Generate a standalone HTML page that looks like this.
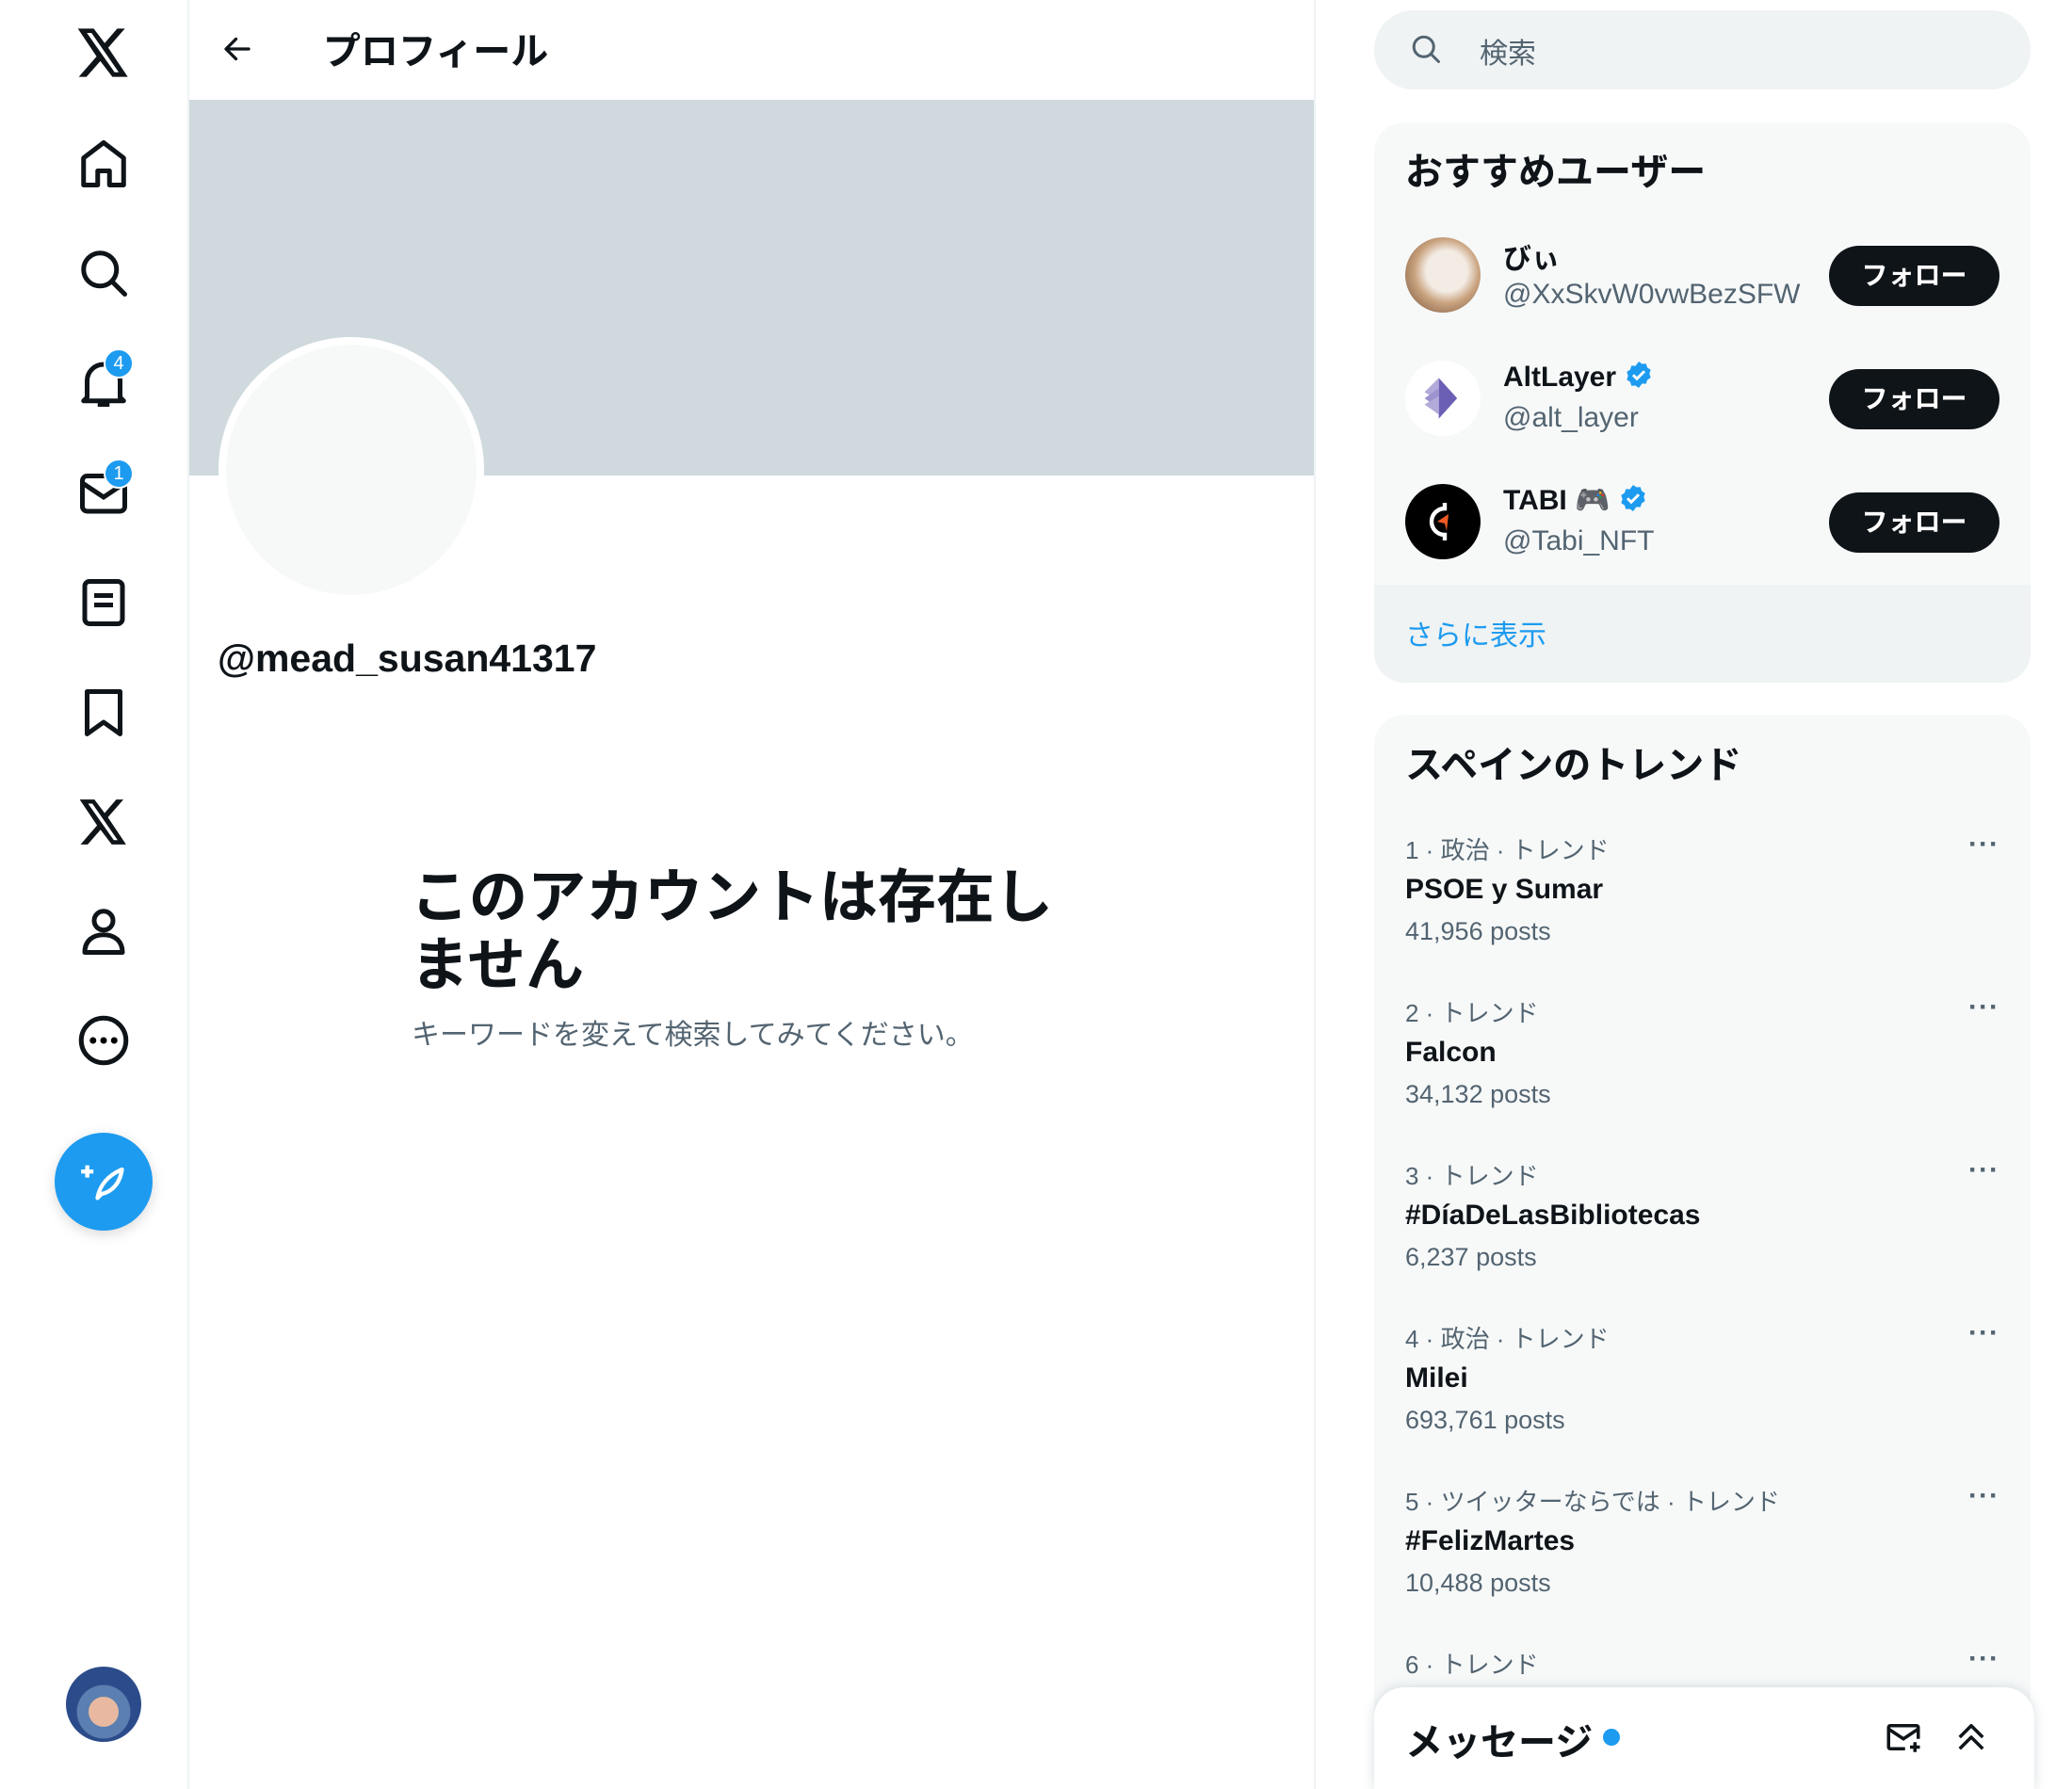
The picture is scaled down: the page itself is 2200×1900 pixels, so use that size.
<!DOCTYPE html>
<html style="width:2200px;height:1900px;overflow:hidden"><head><meta charset="utf-8">
<style>
*{margin:0;padding:0;box-sizing:border-box}
body{width:2200px;height:1900px;background:#fff;font-family:"Liberation Sans","Noto Sans CJK JP",sans-serif;color:#0f1419;position:relative;overflow:hidden}
.a{position:absolute}
.ic{position:absolute;left:80px;width:60px;height:60px}
.ic svg{width:60px;height:60px}
.badge{position:absolute;width:32px;height:32px;border-radius:50%;background:#1d9bf0;border:2px solid #fff;color:#fff;font-size:20px;text-align:center;line-height:28px}
.btn{position:absolute;left:1942px;width:181px;height:64px;border-radius:32px;background:#0f1419;color:#fff;font-size:28px;font-weight:bold;text-align:center;line-height:64px}
.name{position:absolute;left:1596px;font-size:30px;font-weight:bold}
.handle{position:absolute;left:1596px;font-size:30px;color:#536471}
.meta{position:absolute;left:1492px;font-size:26px;color:#536471}
.tn{position:absolute;left:1492px;font-size:30px;font-weight:bold}
.dots{position:absolute;left:2090px;font-size:30px;color:#536471;letter-spacing:1px;font-weight:bold}
.ver{display:inline-block;vertical-align:-4px;width:32px;height:32px}
</style></head><body>
<div class="a" style="left:199px;top:0;width:2px;height:1900px;background:#eff3f4"></div>
<svg class="a" style="left:82px;top:30px" width="56" height="52" viewBox="0 0 24 22"><path d="M18.2 0h3.5l-7.6 8.7L23 22h-7l-5.5-7.2L4.2 22H.7l8.1-9.3L.3 0h7.2l5 6.6zm-1.2 19.9h1.9L6.5 2H4.4z" fill="#0f1419"/></svg>
<div class="ic" style="top:144px"><svg viewBox="0 0 24 24"><path d="M12 3L3.5 9.5V21h6v-6h5v6h6V9.5z" fill="none" stroke="#0f1419" stroke-width="2" stroke-linejoin="round"/></svg></div>
<div class="ic" style="top:260px"><svg viewBox="0 0 24 24"><circle cx="10.5" cy="10.5" r="7" fill="none" stroke="#0f1419" stroke-width="2"/><path d="M15.5 15.5L21 21" stroke="#0f1419" stroke-width="2" stroke-linecap="round"/></svg></div>
<div class="ic" style="top:377px"><svg viewBox="0 0 24 24"><path d="M5 18V11a7 7 0 0114 0v7l1.5 1.5h-17zM9.5 21h5" fill="none" stroke="#0f1419" stroke-width="2" stroke-linejoin="round"/></svg></div>
<div class="badge" style="left:110px;top:370px">4</div>
<div class="ic" style="top:493px"><svg viewBox="0 0 24 24"><rect x="3" y="5" width="18" height="15" rx="2" fill="none" stroke="#0f1419" stroke-width="2"/><path d="M3 8l9 6 9-6" fill="none" stroke="#0f1419" stroke-width="2"/></svg></div>
<div class="badge" style="left:110px;top:487px">1</div>
<div class="ic" style="top:610px"><svg viewBox="0 0 24 24"><rect x="4" y="3" width="16" height="18" rx="2" fill="none" stroke="#0f1419" stroke-width="2"/><path d="M8 9h8M8 13h8" stroke="#0f1419" stroke-width="2"/></svg></div>
<div class="ic" style="top:727px"><svg viewBox="0 0 24 24"><path d="M5 3h14v18l-7-5-7 5z" fill="none" stroke="#0f1419" stroke-width="2" stroke-linejoin="round"/></svg></div>
<svg class="a" style="left:84px;top:849px" width="52" height="48" viewBox="0 0 24 22"><path d="M18.2 0h3.5l-7.6 8.7L23 22h-7l-5.5-7.2L4.2 22H.7l8.1-9.3L.3 0h7.2l5 6.6zm-1.2 19.9h1.9L6.5 2H4.4z" fill="#0f1419"/></svg>
<div class="ic" style="top:959px"><svg viewBox="0 0 24 24"><circle cx="12" cy="7.5" r="4" fill="none" stroke="#0f1419" stroke-width="2"/><path d="M4 21c0-5 3.5-7.5 8-7.5s8 2.5 8 7.5z" fill="none" stroke="#0f1419" stroke-width="2" stroke-linejoin="round"/></svg></div>
<div class="ic" style="top:1075px"><svg viewBox="0 0 24 24"><circle cx="12" cy="12" r="9.5" fill="none" stroke="#0f1419" stroke-width="2"/><circle cx="7.5" cy="12" r="1.4"/><circle cx="12" cy="12" r="1.4"/><circle cx="16.5" cy="12" r="1.4"/></svg></div>
<div class="a" style="left:58px;top:1203px;width:104px;height:104px;border-radius:50%;background:#1d9bf0;box-shadow:0 4px 14px rgba(0,0,0,.15)"><svg style="position:absolute;left:26px;top:26px" width="52" height="52" viewBox="0 0 24 24"><path d="M9 20c1-6 5-11 12-14-1 7-5 11-10 12l-2 2z" fill="none" stroke="#fff" stroke-width="2" stroke-linejoin="round"/><path d="M4 4v6M1 7h6" stroke="#fff" stroke-width="2"/></svg></div>
<div class="a" style="left:70px;top:1770px;width:80px;height:80px;border-radius:50%;background:radial-gradient(circle at 50% 60%,#e8b9a0 0 25%,#5a7fb0 26% 45%,#2b4b8a 46%)"></div>

<div class="a" style="left:1395px;top:0;width:2px;height:1900px;background:#eff3f4"></div>
<svg class="a" style="left:234px;top:34px" width="36" height="36" viewBox="0 0 24 24"><path d="M20 12H5M11 5l-7 7 7 7" fill="none" stroke="#0f1419" stroke-width="2.2" stroke-linecap="round" stroke-linejoin="round"/></svg>
<div class="a" style="left:343px;top:22px;font-size:40px;font-weight:bold">プロフィール</div>
<div class="a" style="left:201px;top:106px;width:1194px;height:399px;background:#cfd9de"></div>
<div class="a" style="left:232px;top:358px;width:282px;height:282px;border-radius:50%;background:#f7f9f9;border:8px solid #fff"></div>
<div class="a" style="left:231px;top:676px;font-size:41px;font-weight:bold">@mead_susan41317</div>
<div class="a" style="left:436px;top:918px;font-size:62px;font-weight:bold;line-height:72px;width:720px">このアカウントは存在しません</div>
<div class="a" style="left:437px;top:1074px;font-size:30px;color:#536471">キーワードを変えて検索してみてください。</div>

<div class="a" style="left:1459px;top:11px;width:697px;height:84px;border-radius:42px;background:#eff3f4"></div>
<svg class="a" style="left:1496px;top:34px" width="36" height="36" viewBox="0 0 24 24"><circle cx="10.5" cy="10.5" r="7" fill="none" stroke="#536471" stroke-width="2"/><path d="M15.5 15.5L21 21" stroke="#536471" stroke-width="2" stroke-linecap="round"/></svg>
<div class="a" style="left:1571px;top:32px;font-size:30px;color:#536471">検索</div>

<div class="a" style="left:1459px;top:130px;width:697px;height:595px;border-radius:32px;background:#f7f9f9;overflow:hidden"><div style="position:absolute;left:0;top:491px;width:697px;height:104px;background:#eff3f4"></div></div>
<div class="a" style="left:1492px;top:150px;font-size:40px;font-weight:bold">おすすめユーザー</div>
<div class="a" style="left:1492px;top:252px;width:80px;height:80px;border-radius:50%;background:radial-gradient(circle at 55% 45%,#f3ece4 0 35%,#c9a27e 55%,#6b4a35)"></div>
<div class="name" style="top:250px">びぃ</div>
<div class="handle" style="top:296px">@XxSkvW0vwBezSFW</div>
<div class="btn" style="top:261px">フォロー</div>
<div class="a" style="left:1492px;top:383px;width:80px;height:80px;border-radius:50%;background:#fff"><svg style="position:absolute;left:14px;top:14px" width="52" height="52" viewBox="0 0 24 24"><path d="M10 2l9 10-9 10z" fill="#6a5fb5"/><path d="M10 2L3 9l7 4z" fill="#b2aad8"/><path d="M10 7l-7 5 7 5z" fill="#9c93cf"/><path d="M10 11l-7 4 7 5z" fill="#b2aad8"/></svg></div>
<div class="name" style="top:382px">AltLayer <svg class="ver" viewBox="0 0 24 24"><path d="M12 1.5l2.6 1.9 3.2-.2 1 3.1 2.7 1.8-1 3.1 1 3.1-2.7 1.8-1 3.1-3.2-.2L12 22.5l-2.6-1.9-3.2.2-1-3.1-2.7-1.8 1-3.1-1-3.1 2.7-1.8 1-3.1 3.2.2z" fill="#1d9bf0"/><path d="M7.5 12.2l3 3 6-6" fill="none" stroke="#fff" stroke-width="2.2"/></svg></div>
<div class="handle" style="top:427px">@alt_layer</div>
<div class="btn" style="top:392px">フォロー</div>
<div class="a" style="left:1492px;top:514px;width:80px;height:80px;border-radius:50%;background:#000"><svg style="position:absolute;left:18px;top:14px" width="44" height="52" viewBox="0 0 22 26"><path d="M12 3v3A7 7 0 1 0 12 20v3" fill="none" stroke="#fff" stroke-width="2.2"/><path d="M14 9l-6 4 4 1 1 4z" fill="#f05a24"/></svg></div>
<div class="name" style="top:513px">TABI 🎮 <svg class="ver" viewBox="0 0 24 24"><path d="M12 1.5l2.6 1.9 3.2-.2 1 3.1 2.7 1.8-1 3.1 1 3.1-2.7 1.8-1 3.1-3.2-.2L12 22.5l-2.6-1.9-3.2.2-1-3.1-2.7-1.8 1-3.1-1-3.1 2.7-1.8 1-3.1 3.2.2z" fill="#1d9bf0"/><path d="M7.5 12.2l3 3 6-6" fill="none" stroke="#fff" stroke-width="2.2"/></svg></div>
<div class="handle" style="top:558px">@Tabi_NFT</div>
<div class="btn" style="top:523px">フォロー</div>
<div class="a" style="left:1492px;top:650px;font-size:30px;color:#1d9bf0">さらに表示</div>

<div class="a" style="left:1459px;top:759px;width:697px;height:1141px;border-radius:32px 32px 0 0;background:#f7f9f9"></div>
<div class="a" style="left:1492px;top:780px;font-size:40px;font-weight:bold">スペインのトレンド</div>

<div class="meta" style="top:883px">1 · 政治 · トレンド</div><div class="tn" style="top:928px">PSOE y Sumar</div><div class="meta" style="top:974px;font-size:27px">41,956 posts</div><div class="dots" style="top:880px">···</div>
<div class="meta" style="top:1056px">2 · トレンド</div><div class="tn" style="top:1101px">Falcon</div><div class="meta" style="top:1147px;font-size:27px">34,132 posts</div><div class="dots" style="top:1053px">···</div>
<div class="meta" style="top:1229px">3 · トレンド</div><div class="tn" style="top:1274px">#DíaDeLasBibliotecas</div><div class="meta" style="top:1320px;font-size:27px">6,237 posts</div><div class="dots" style="top:1226px">···</div>
<div class="meta" style="top:1402px">4 · 政治 · トレンド</div><div class="tn" style="top:1447px">Milei</div><div class="meta" style="top:1493px;font-size:27px">693,761 posts</div><div class="dots" style="top:1399px">···</div>
<div class="meta" style="top:1575px">5 · ツイッターならでは · トレンド</div><div class="tn" style="top:1620px">#FelizMartes</div><div class="meta" style="top:1666px;font-size:27px">10,488 posts</div><div class="dots" style="top:1572px">···</div>
<div class="meta" style="top:1748px">6 · トレンド</div><div class="dots" style="top:1745px">···</div>

<div class="a" style="left:1459px;top:1792px;width:701px;height:108px;border-radius:32px 32px 0 0;background:#fff;box-shadow:0 0 12px rgba(101,119,134,.25)"></div>
<div class="a" style="left:1492px;top:1818px;font-size:40px;font-weight:bold">メッセージ</div>
<div class="a" style="left:1702px;top:1836px;width:18px;height:18px;border-radius:50%;background:#1d9bf0"></div>
<svg class="a" style="left:2000px;top:1824px" width="42" height="42" viewBox="0 0 24 24"><path d="M13 19H4a1 1 0 01-1-1V6a1 1 0 011-1h16a1 1 0 011 1v7" fill="none" stroke="#0f1419" stroke-width="2"/><path d="M3 7l9 6 9-6M19 15v6M16 18h6" fill="none" stroke="#0f1419" stroke-width="2"/></svg>
<svg class="a" style="left:2072px;top:1824px" width="42" height="42" viewBox="0 0 24 24"><path d="M5 12l7-7 7 7M5 19l7-7 7 7" fill="none" stroke="#0f1419" stroke-width="2" stroke-linejoin="round"/></svg>
</body></html>
